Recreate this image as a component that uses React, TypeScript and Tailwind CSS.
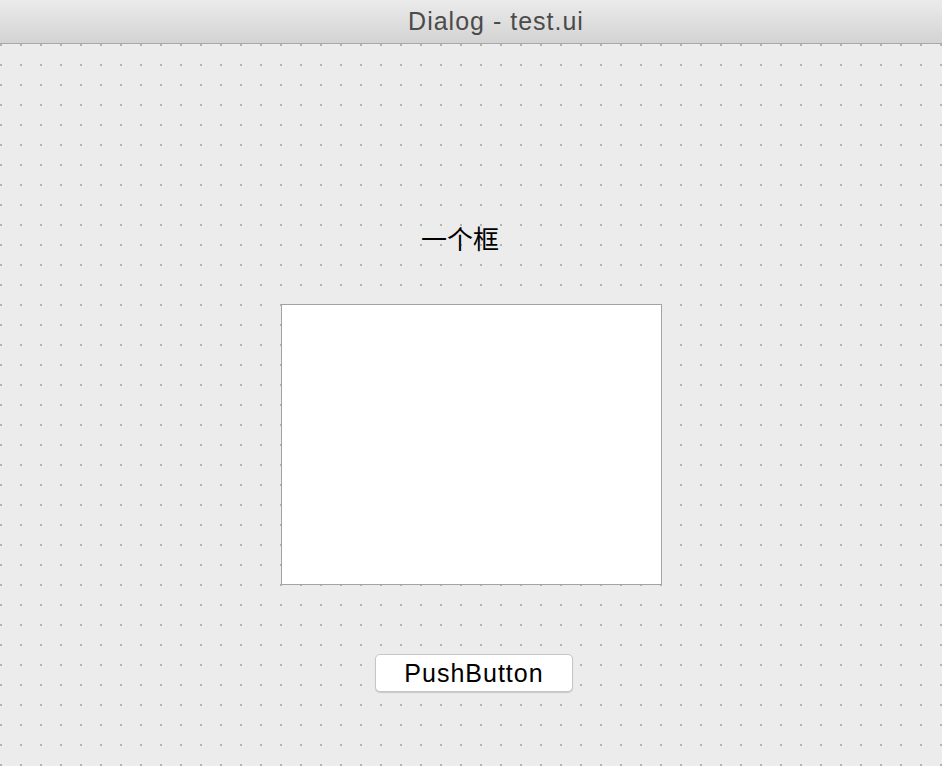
export default function App() {
  return (
    <div className="flex h-[766px] w-[942px] flex-col overflow-hidden bg-[#ececec] font-['Liberation_Sans','Noto_Sans_CJK_SC',sans-serif]">
      {/* title bar */}
      <div className="flex h-[44px] shrink-0 items-center justify-center border-b border-[#a9a9a9] bg-gradient-to-b from-[#ebebeb] to-[#d3d3d3] pl-[50px]">
        <span className="text-[25px] leading-none tracking-[1px] text-[#4b4b4b]">Dialog - test.ui</span>
      </div>

      {/* form canvas */}
      <div className="flex flex-1 flex-col bg-[radial-gradient(circle_at_1px_1px,#b3b3b3_1px,transparent_1.2px)] bg-[length:20px_20px]">
        <div className="ml-[421px] mt-[180px] h-[32px] text-[26px] leading-[32px] text-black">一个框</div>

        <div className="ml-[281px] mt-[48px] h-[281px] w-[381px] border border-[#a3a3a3] bg-white" />

        <div className="ml-[375px] mt-[69px] flex h-[38px] w-[198px] items-center justify-center rounded-[5px] border border-[#c6c6c6] bg-white shadow-[0_1px_1px_rgba(0,0,0,0.15)]">
          <span className="text-[25px] leading-none tracking-[1px] text-black">PushButton</span>
        </div>
      </div>
    </div>
  )
}
